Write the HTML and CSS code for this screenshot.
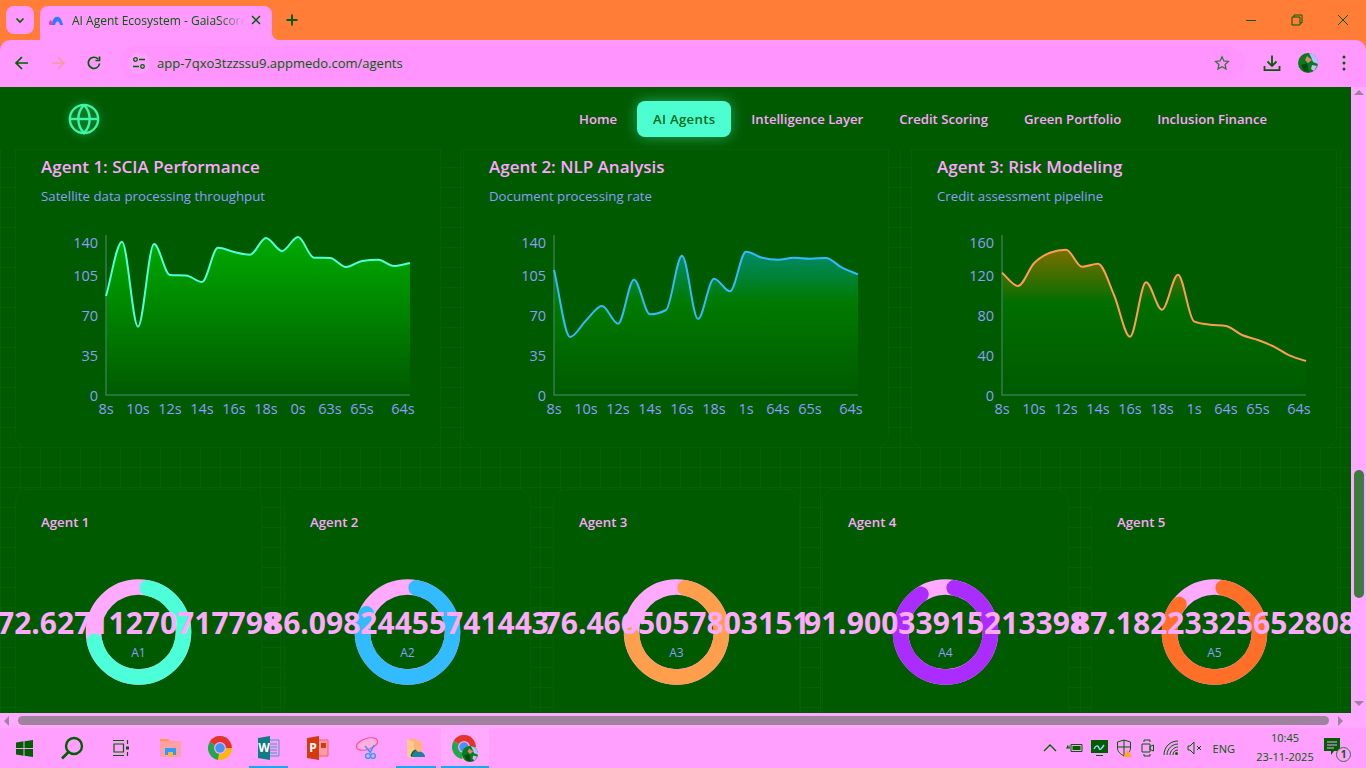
FILE: index.html
```html
<!DOCTYPE html>
<html lang="en">
  <head>
    <meta charset="UTF-8" />
    <meta name="viewport" content="width=device-width, initial-scale=1.0" />
    <title>AI Agent Ecosystem - GaiaScore</title>
    <link rel="stylesheet" href="styles.css">
  </head>
  <body>
    <div class="tabstrip">
      <button class="tab-list">
        <svg width="12" height="12" viewBox="0 0 12 12"><path class="ico" d="M2.5 4.5 6 8l3.5-3.5" stroke-width="1.6"/></svg>
      </button>
      <div class="tab">
        <svg class="favicon" width="15" height="12" viewBox="0 0 15 12"><path d="M1 11a3 3 0 0 1 1-5l2 5z" fill="#ff2fb0"/><path d="M3 11C3 1 12 -1 14 11h-3C10 6 7 6 6 11z" fill="#2a7dff"/></svg>
        <span class="tab-title">AI Agent Ecosystem - GaiaScore</span>
        <svg width="10" height="10" viewBox="0 0 10 10"><path class="ico" d="M1 1l8 8M9 1 1 9" stroke-width="1.5"/></svg>
      </div>
      <svg class="new-tab" width="12" height="12" viewBox="0 0 12 12"><path class="ico" d="M6 .5v11M.5 6h11" stroke-width="2"/></svg>
      <div class="window-btns">
        <svg width="12" height="12" viewBox="0 0 12 12"><path class="ico" d="M1 6.5h10"/></svg>
        <svg width="12" height="12" viewBox="0 0 12 12"><path class="ico" d="M1 3h8v8H1zM3 3V1h8v8H9"/></svg>
        <svg width="12" height="12" viewBox="0 0 12 12"><path class="ico" d="M1 1l10 10M11 1 1 11"/></svg>
      </div>
    </div>

    <div class="toolbar">
      <svg class="nav-ico" width="16" height="16" viewBox="0 0 16 16"><path class="ico" d="M14 8H2.5M8 2 2 8l6 6" stroke-width="1.7"/></svg>
      <svg class="nav-ico" width="16" height="16" viewBox="0 0 16 16"><path class="ico faded" d="M2 8h11.5M8 2l6 6-6 6" stroke-width="1.5"/></svg>
      <svg class="nav-ico" width="16" height="16" viewBox="0 0 16 16"><path class="ico" d="M13.5 8.5A5.6 5.6 0 1 1 12 4M13.5 1.500V5.500H9.500" stroke-width="1.7"/></svg>
      <div class="omnibox">
        <span class="site-chip">
          <svg width="14" height="14" viewBox="0 0 14 14"><circle class="ico" cx="3.500" cy="3.500" r="1.800" stroke-width="1.300"/><path class="ico" d="M7 3.500h6M1 10.500h6" stroke-width="1.300"/><circle class="ico" cx="10.500" cy="10.500" r="1.800" stroke-width="1.300"/></svg>
        </span>
        <span class="url">app-7qxo3tzzssu9.appmedo.com/agents</span>
        <svg class="star" width="16" height="16" viewBox="0 0 16 16"><path class="ico star-line" d="m8 1.800 1.900 4.100 4.500.5-3.300 3 .9 4.500L8 11.700l-4 2.200.9-4.500-3.300-3 4.500-.5z" stroke-width="1.300"/></svg>
      </div>
      <div class="toolbar-end">
        <svg width="18" height="18" viewBox="0 0 18 18"><path class="ico" d="M9 1.500v10M4.500 7.500 9 12l4.500-4.500M1.500 12v4.200h15V12" stroke-width="1.800"/></svg>
        <svg class="avatar" width="20" height="20" viewBox="0 0 20 20"><use href="#avatar"/></svg>
        <svg class="kebab" width="4" height="16" viewBox="0 0 4 16"><circle class="dot" cx="2" cy="2" r="1.500"/><circle class="dot" cx="2" cy="8" r="1.500"/><circle class="dot" cx="2" cy="14" r="1.500"/></svg>
      </div>
    </div>

    <div class="viewport">
      <main>
        <nav class="topnav">
          <svg class="logo" width="34" height="34" viewBox="0 0 24 24"><circle cx="12" cy="12" r="10"/><path d="M12 2a14.500 14.500 0 0 0 0 20 14.500 14.500 0 0 0 0-20"/><path d="M2 12h20"/></svg>
          <div class="nav-links">
            <a>Home</a>
            <a class="active">AI Agents</a>
            <a>Intelligence Layer</a>
            <a>Credit Scoring</a>
            <a>Green Portfolio</a>
            <a>Inclusion Finance</a>
          </div>
        </nav>

        <section class="chart-row">
          <div class="card chart-card">
            <h3>Agent 1: SCIA Performance</h3>
            <p>Satellite data processing throughput</p>
            <svg class="chart" width="374" height="192" viewBox="0 0 374 192">
              <defs>
                <linearGradient id="fill1" x1="0" y1="0" x2="0" y2="1">
                  <stop offset="0" stop-color="#00aa00"/>
                  <stop offset="1" stop-color="#005a00"/>
                </linearGradient>
              </defs>
              <path class="area" id="area1" fill="url(#fill1)"/>
              <path class="axis" d="M65 7V167H369"/>
              <path class="line line-teal" id="line1"/>
              <g class="y-ticks">
                <text x="57" y="20">140</text><text x="57" y="53">105</text><text x="57" y="93">70</text><text x="57" y="133">35</text><text x="57" y="173">0</text>
              </g>
              <g class="x-ticks">
                <text x="65" y="186">8s</text><text x="97" y="186">10s</text><text x="129" y="186">12s</text><text x="161" y="186">14s</text><text x="193" y="186">16s</text><text x="225" y="186">18s</text><text x="257" y="186">0s</text><text x="289" y="186">63s</text><text x="321" y="186">65s</text><text x="362" y="186">64s</text>
              </g>
            </svg>
          </div>

          <div class="card chart-card">
            <h3>Agent 2: NLP Analysis</h3>
            <p>Document processing rate</p>
            <svg class="chart" width="374" height="192" viewBox="0 0 374 192">
              <defs>
                <linearGradient id="fill2" x1="0" y1="0" x2="0" y2="1">
                  <stop offset="0" stop-color="#008a6a"/>
                  <stop offset=".35" stop-color="#007a00"/>
                  <stop offset="1" stop-color="#005a00"/>
                </linearGradient>
              </defs>
              <path class="area" id="area2" fill="url(#fill2)"/>
              <path class="axis" d="M65 7V167H369"/>
              <path class="line line-blue" id="line2"/>
              <g class="y-ticks">
                <text x="57" y="20">140</text><text x="57" y="53">105</text><text x="57" y="93">70</text><text x="57" y="133">35</text><text x="57" y="173">0</text>
              </g>
              <g class="x-ticks">
                <text x="65" y="186">8s</text><text x="97" y="186">10s</text><text x="129" y="186">12s</text><text x="161" y="186">14s</text><text x="193" y="186">16s</text><text x="225" y="186">18s</text><text x="257" y="186">1s</text><text x="289" y="186">64s</text><text x="321" y="186">65s</text><text x="362" y="186">64s</text>
              </g>
            </svg>
          </div>

          <div class="card chart-card">
            <h3>Agent 3: Risk Modeling</h3>
            <p>Credit assessment pipeline</p>
            <svg class="chart" width="374" height="192" viewBox="0 0 374 192">
              <defs>
                <linearGradient id="fill3" x1="0" y1="0" x2="0" y2="1">
                  <stop offset="0" stop-color="#7c6e00"/>
                  <stop offset=".37" stop-color="#006e00"/>
                  <stop offset="1" stop-color="#005a00"/>
                </linearGradient>
              </defs>
              <path class="area" id="area3" fill="url(#fill3)"/>
              <path class="axis" d="M65 7V167H369"/>
              <path class="line line-orange" id="line3"/>
              <g class="y-ticks">
                <text x="57" y="20">160</text><text x="57" y="53">120</text><text x="57" y="93">80</text><text x="57" y="133">40</text><text x="57" y="173">0</text>
              </g>
              <g class="x-ticks">
                <text x="65" y="186">8s</text><text x="97" y="186">10s</text><text x="129" y="186">12s</text><text x="161" y="186">14s</text><text x="193" y="186">16s</text><text x="225" y="186">18s</text><text x="257" y="186">1s</text><text x="289" y="186">64s</text><text x="321" y="186">65s</text><text x="362" y="186">64s</text>
              </g>
            </svg>
          </div>
        </section>

        <section class="ring-row">
          <div class="card ring-card">
            <h4>Agent 1</h4>
            <svg class="ring" width="195" height="150" viewBox="0 0 195 150">
              <circle class="ring-track" cx="97.500" cy="75" r="45"/>
              <path class="ring-arc ring-teal" pathLength="360" stroke-dasharray="247 360" d="M97.500 30a45 45 0 1 1 0 90 45 45 0 1 1 0-90" transform="rotate(11 97.500 75)"/>
              <text class="ring-value" x="97.500" y="77">72.62711270717798</text>
              <text class="ring-name" x="97.500" y="100">A1</text>
            </svg>
          </div>
          <div class="card ring-card">
            <h4>Agent 2</h4>
            <svg class="ring" width="195" height="150" viewBox="0 0 195 150">
              <circle class="ring-track" cx="97.500" cy="75" r="45"/>
              <path class="ring-arc ring-blue" pathLength="360" stroke-dasharray="283 360" d="M97.500 30a45 45 0 1 1 0 90 45 45 0 1 1 0-90" transform="rotate(11 97.500 75)"/>
              <text class="ring-value" x="97.500" y="77">86.09824455741443</text>
              <text class="ring-name" x="97.500" y="100">A2</text>
            </svg>
          </div>
          <div class="card ring-card">
            <h4>Agent 3</h4>
            <svg class="ring" width="195" height="150" viewBox="0 0 195 150">
              <circle class="ring-track" cx="97.500" cy="75" r="45"/>
              <path class="ring-arc ring-orange" pathLength="360" stroke-dasharray="255 360" d="M97.500 30a45 45 0 1 1 0 90 45 45 0 1 1 0-90" transform="rotate(11 97.500 75)"/>
              <text class="ring-value" x="97.500" y="77">76.4665057803151</text>
              <text class="ring-name" x="97.500" y="100">A3</text>
            </svg>
          </div>
          <div class="card ring-card">
            <h4>Agent 4</h4>
            <svg class="ring" width="195" height="150" viewBox="0 0 195 150">
              <circle class="ring-track" cx="97.500" cy="75" r="45"/>
              <path class="ring-arc ring-purple" pathLength="360" stroke-dasharray="316 360" d="M97.500 30a45 45 0 1 1 0 90 45 45 0 1 1 0-90" transform="rotate(11 97.500 75)"/>
              <text class="ring-value" x="97.500" y="77">91.90033915213398</text>
              <text class="ring-name" x="97.500" y="100">A4</text>
            </svg>
          </div>
          <div class="card ring-card">
            <h4>Agent 5</h4>
            <svg class="ring" width="195" height="150" viewBox="0 0 195 150">
              <circle class="ring-track" cx="97.500" cy="75" r="45"/>
              <path class="ring-arc ring-deep" pathLength="360" stroke-dasharray="297 360" d="M97.500 30a45 45 0 1 1 0 90 45 45 0 1 1 0-90" transform="rotate(11 97.500 75)"/>
              <text class="ring-value" x="97.500" y="77">87.18223325652808</text>
              <text class="ring-name" x="97.500" y="100">A5</text>
            </svg>
          </div>
        </section>
      </main>

      <div class="vscroll">
        <span class="arrow arrow-up"></span>
        <span class="vthumb"></span>
        <span class="arrow arrow-down"></span>
      </div>
    </div>

    <div class="hscroll">
      <span class="arrow arrow-left"></span>
      <span class="hthumb"></span>
      <span class="arrow arrow-right"></span>
    </div>

    <footer class="taskbar">
      <div class="task-item wide">
        <svg width="17" height="17" viewBox="0 0 17 17"><path class="win" d="M0 2.400 7.500 1.300V8H0zM8.500 1.200 17 0v8H8.500zM0 9h7.500v6.700L0 14.600zM8.500 9H17v8l-8.500-1.200z"/></svg>
      </div>
      <div class="task-item wide">
        <svg width="24" height="24" viewBox="0 0 24 24"><circle class="ico" cx="14" cy="10" r="8" stroke-width="2.400"/><path class="ico" d="M8.500 16 2 22.500" stroke-width="2.600"/></svg>
      </div>
      <div class="task-item view-item">
        <svg width="18" height="18" viewBox="0 0 18 18"><path class="ico" d="M1 1.500h11M1 16.500h11M2 5h9.500v8H2zM15.500 1v4M15.500 13v4" stroke-width="1.200"/><rect class="dot" x="14" y="7.500" width="3" height="3"/></svg>
      </div>
      <div class="task-item">
        <svg width="22" height="20" viewBox="0 0 22 20"><path d="M0 1h8l2 2H0z" fill="#ff9c2a"/><path d="M0 3h21v16H0z" fill="#ff9fa6"/><path d="M5 17V10h11v7h-3v-3H8v3z" fill="#2a9dff"/><path d="M8 14h5v5H8z" fill="#ffb52e"/></svg>
      </div>
      <div class="task-item">
        <svg width="24" height="24" viewBox="0 0 24 24"><use href="#chrome"/></svg>
      </div>
      <div class="task-item running">
        <svg width="22" height="24" viewBox="0 0 22 24"><path d="M10 4h11v16H10z" fill="#ff9cff" stroke="#3f9fc0"/><path class="sheet-lines" d="M12 8h7M12 11h7M12 14h7M12 17h7"/><path d="M0 2 12 0v24L0 22z" fill="#0f7c86"/><text class="doc-letter" x="6" y="16">W</text></svg>
      </div>
      <div class="task-item">
        <svg width="22" height="24" viewBox="0 0 22 24"><path d="M10 4h11v16H10z" fill="#ff9ca8" stroke="#ff5a55"/><path d="M14 7h5v5h-5z" fill="#d23a10"/><path d="M0 2 12 0v24L0 22z" fill="#d23a10"/><text class="doc-letter" x="6" y="16">P</text></svg>
      </div>
      <div class="task-item">
        <svg width="24" height="24" viewBox="0 0 24 24"><ellipse cx="12" cy="8" rx="11" ry="5.500" fill="#ffb0e0" stroke="#ff4fa0" stroke-width="1.200" transform="rotate(-18 12 8)"/><path d="M10 10l5 6M19 9l-4 8" stroke="#2a9dff" stroke-width="1.500"/><circle cx="13" cy="20" r="2.400" fill="none" stroke="#2a9dff" stroke-width="1.400"/><circle cx="18" cy="20" r="2.400" fill="none" stroke="#2a9dff" stroke-width="1.400"/></svg>
      </div>
      <div class="task-item running folder-item">
        <svg width="22" height="24" viewBox="0 0 22 24"><path d="M2 3h8l7 3v15H2z" fill="#ffb27a"/><path d="M2 3l7 3v17l-7-3z" fill="#ffc98f"/><path d="M6 21c1-6 5-9 7-5 3-1 7 1 7 5z" fill="#1f7f9f"/><path d="M6 20c1-3 3-6 5-6" stroke="#005e00" fill="none" stroke-width="1.200"/></svg>
      </div>
      <div class="task-item running current">
        <svg width="27" height="27" viewBox="0 0 27 27"><svg width="24" height="24" viewBox="0 0 24 24"><use href="#chrome"/></svg><svg x="10" y="11" width="16" height="16" viewBox="0 0 20 20"><use href="#avatar"/></svg></svg>
      </div>

      <div class="tray">
        <svg width="16" height="10" viewBox="0 0 16 10"><path class="ico" d="M2 8l6-6 6 6" stroke-width="1.300"/></svg>
        <svg width="17" height="12" viewBox="0 0 17 12"><path class="ico" d="M5 2.500h11v7H5z"/><rect class="dot" x="6.500" y="4" width="8" height="4"/><path class="ico" d="M0 6h4M1.500 3.500V6M3 3.500V6"/></svg>
        <svg width="17" height="16" viewBox="0 0 17 16"><rect class="dot" width="17" height="13"/><path d="M3 9c2-4 4-4 5-1s3 0 5-3" stroke="#9ad0ff" fill="none" stroke-width="1.500"/><path class="ico" d="M5 15.500h7"/></svg>
        <svg width="17" height="18" viewBox="0 0 17 18"><path class="ico" d="M8 1 1.500 3v6c0 4 3 6 6.500 8 3.500-2 6.500-4 6.500-8V3zM8 1v16M1.500 8h13"/><path d="M11.500 11 16 18H7z" fill="#ffa91f"/></svg>
        <svg width="14" height="18" viewBox="0 0 14 18"><path class="ico" d="M3 3V1h6v2M3 15v2h6v-2M1 5h8v8H1zM12.500 6v6L9 10.500v-3z"/></svg>
        <svg width="16" height="16" viewBox="0 0 16 16"><path class="ico" d="M1 15C1 7 7 1 15 1M4 15C4 9 9 4 15 4M7 15c0-4 4-8 8-8M10 15c0-3 2-5 5-5"/><circle class="dot" cx="13.500" cy="13.500" r="1.500"/></svg>
        <svg width="15" height="14" viewBox="0 0 15 14"><path class="ico" d="M1 5v4h2l4 4V1L3 5zM10 5l4 4M14 5l-4 4"/></svg>
        <span class="lang">ENG</span>
        <div class="clock"><span>10:45</span><span>23-11-2025</span></div>
        <div class="notify">
          <svg width="24" height="24" viewBox="0 0 24 24"><path class="dot" d="M2 2h16v13h-6l-3 4v-4H2z"/><path d="M5 6h10M5 9h10M5 12h7" stroke="#ffa0ff" stroke-width="1.200"/></svg>
          <span class="notify-count">1</span>
        </div>
      </div>
    </footer>

    <svg class="icon-defs" width="0" height="0">
      <symbol id="chrome" viewBox="2 2 20 20">
        <path d="M12 12 3.300 7A10 10 0 0 1 22 12z" fill="#e2352a"/>
        <path d="M12 12 3.300 7A10 10 0 0 0 10.500 21.900z" fill="#22a84a"/>
        <path d="M12 12 22 12A10 10 0 0 1 10.500 21.900z" fill="#fbb80a"/>
        <circle cx="12" cy="12" r="5" fill="#ffa0ff"/>
        <circle cx="12" cy="12" r="3.900" fill="#3f96f5"/>
      </symbol>
      <symbol id="avatar" viewBox="0 0 20 20">
        <circle cx="10" cy="10" r="10" fill="#0a7a1e"/>
        <path d="M11 0a10 10 0 0 1 9 11l-5-2-2-5z" fill="#a9c4ff"/>
        <path d="M9 3l5 4-4 3-3-3z" fill="#d98a70"/>
        <path d="M14 12l5 1-3 5-3-2z" fill="#c9b8ff"/>
        <path d="M3 12l6-2 2 9-5-1z" fill="#044d10"/>
      </symbol>
    </svg>

    <script src="charts.js"></script>
  </body>
</html>
```

FILE: styles.css
```css
* {
  box-sizing: border-box;
}

html, body {
  height: 100%;
  margin: 0;
  overflow: hidden;
}

body {
  display: flex;
  flex-direction: column;
  font-family: "Open Sans", "Noto Sans", sans-serif;
  color: #ffa6ff;
  background-color: #ff7d37;
}

.ico {
  fill: none;
  stroke: #005e00;
}

.ico.faded {
  stroke: #f59a9a;
}

.dot {
  fill: #005e00;
}

.win {
  fill: #005e00;
}

/* browser chrome */
.tabstrip {
  height: 40px;
  flex: none;
  display: flex;
  align-items: flex-start;
  padding-left: 6px;
  background-color: #ff7d37;
}

.tab-list {
  width: 28px;
  height: 28px;
  margin-top: 6px;
  padding: 0;
  border: 0;
  border-radius: 8px;
  background-color: #ff99ff;
  display: flex;
  align-items: center;
  justify-content: center;
}

.tab {
  position: relative;
  width: 232px;
  height: 34px;
  margin: 6px 0 0 6px;
  padding: 0 11px 6px 9px;
  display: flex;
  align-items: center;
  border-radius: 8px 8px 0 0;
  background-color: #ff99ff;
}

.tab::after {
  content: "";
  position: absolute;
  right: -8px;
  bottom: 0;
  width: 8px;
  height: 8px;
  background: radial-gradient(circle at 100% 0, transparent 8px, #ff99ff 8.5px);
}

.favicon {
  flex: none;
}

.tab-title {
  flex: 1;
  margin: 0 6px 0 8px;
  overflow: hidden;
  white-space: nowrap;
  font-size: 12px;
  color: #005e00;
  -webkit-mask-image: linear-gradient(to right, #000 85%, transparent);
  mask-image: linear-gradient(to right, #000 85%, transparent);
}

.new-tab {
  margin: 14px 0 0 14px;
}

.window-btns {
  margin-left: auto;
  display: flex;
  gap: 34px;
  padding: 14px 17px 0 0;
}

.toolbar {
  height: 47px;
  flex: none;
  display: flex;
  align-items: center;
  padding: 0 0 1px 14px;
  border-radius: 10px 10px 0 0;
  background-color: #ff99ff;
}

.nav-ico {
  margin-right: 20px;
}

.omnibox {
  width: 1125px;
  height: 34px;
  margin-left: -2px;
  padding: 0 15px 0 8px;
  display: flex;
  align-items: center;
  border-radius: 17px;
  background-color: #ff94ff;
}

.site-chip {
  width: 22px;
  height: 22px;
  display: flex;
  align-items: center;
  justify-content: center;
  border-radius: 50%;
  background-color: #ffa0ff;
}

.url {
  flex: 1;
  margin-left: 7px;
  font-size: 13px;
  color: #005e00;
}

.star-line {
  stroke: #3f7040;
}

.toolbar-end {
  display: flex;
  align-items: center;
  margin-left: 18px;
}

.avatar {
  margin-left: 17px;
}

.kebab {
  margin-left: 24px;
}

/* page */
.viewport {
  height: 626px;
  flex: none;
  display: flex;
}

main {
  width: 1351px;
  overflow: hidden;
  background-color: #005a00;
  background-image:
    linear-gradient(#066106 1px, transparent 1px),
    linear-gradient(90deg, #066106 1px, transparent 1px);
  background-size: 20px 20px;
}

.topnav {
  height: 63px;
  padding: 0 68px 0 67px;
  display: flex;
  align-items: center;
  justify-content: space-between;
  background-color: #005a00;
}

.logo {
  fill: none;
  stroke: #3df5a6;
  stroke-width: 1.700;
  filter: drop-shadow(0 0 4px rgba(61, 245, 166, 0.5));
}

.nav-links {
  display: flex;
  gap: 4px;
}

.nav-links a {
  padding: 8px 16px;
  border-radius: 8px;
  font-size: 13.150px;
  line-height: 20px;
  font-weight: 600;
}

.nav-links a.active {
  letter-spacing: 0.3px;
  color: #006a20;
  background-color: #4dffd0;
  box-shadow: 0 0 14px rgba(77, 255, 208, 0.45);
}

.card {
  border-radius: 12px;
  background-color: #005a00;
  box-shadow: 0 0 0 1px #056005;
}

.chart-row {
  display: grid;
  grid-template-columns: repeat(3, 1fr);
  gap: 24px;
  padding: 0 16px;
}

.chart-card {
  height: 297px;
  padding: 5px 25px 0;
  border-radius: 0 0 12px 12px;
}

.chart-card h3 {
  margin: 0;
  font-size: 17px;
  line-height: 24px;
  font-weight: 600;
}

.chart-card p {
  margin: 7px 0 0;
  font-size: 13.250px;
  line-height: 20px;
  color: #8f9cff;
}

.chart {
  display: block;
  margin-top: 22px;
}

.area {
  stroke: none;
}

.axis {
  fill: none;
  stroke: #2f7f4f;
  stroke-width: 1.500;
}

.line {
  fill: none;
  stroke-width: 2;
}

.line-teal { stroke: #4dffd8; }
.line-blue { stroke: #33bbff; }
.line-orange { stroke: #ff9f4d; }

.y-ticks text,
.x-ticks text {
  font-size: 14.500px;
  fill: #8f9cff;
}

.y-ticks text {
  text-anchor: end;
}

.x-ticks text {
  text-anchor: middle;
}

.ring-row {
  display: grid;
  grid-template-columns: repeat(5, 1fr);
  gap: 24px;
  margin-top: 43px;
  padding: 0 16px;
}

.ring-card {
  height: 240px;
  padding: 22px 25px 0;
}

.ring-card h4 {
  margin: 0;
  font-size: 13.250px;
  line-height: 20px;
  font-weight: 600;
}

.ring {
  position: relative;
  z-index: 1;
  display: block;
  margin-top: 25px;
  overflow: visible;
}

.ring-track {
  fill: none;
  stroke: #ffaaff;
  stroke-width: 15.500;
}

.ring-arc {
  fill: none;
  stroke-width: 15.500;
  stroke-linecap: round;
}

.ring-teal { stroke: #4dffd8; }
.ring-blue { stroke: #33bbff; }
.ring-orange { stroke: #ff9f4d; }
.ring-purple { stroke: #aa2cff; }
.ring-deep { stroke: #ff6f28; }

.ring-value {
  font-size: 30px;
  font-weight: 700;
  text-anchor: middle;
  fill: #ffaaff;
}

.ring-name {
  font-size: 12px;
  text-anchor: middle;
  fill: #8f9cff;
}

/* scrollbars */
.vscroll {
  width: 15px;
  display: flex;
  flex-direction: column;
  align-items: center;
  background-color: #ffaaff;
}

.vthumb {
  width: 10px;
  height: 128px;
  margin-top: 375px;
  border-radius: 5px;
  background-color: #3d7a3d;
}

.hscroll {
  height: 15px;
  flex: none;
  display: flex;
  align-items: center;
  padding: 0 19px 0 4px;
  background-color: #ffaaff;
}

.hthumb {
  width: 1311px;
  height: 9px;
  margin: 0 9px 0 9px;
  border-radius: 5px;
  background-color: #a0829f;
}

.arrow {
  width: 0;
  height: 0;
  border: 5px solid transparent;
}

.arrow-up {
  margin-top: 3px;
  border-top-width: 0;
  border-bottom: 5px solid #a0829f;
}

.arrow-down {
  margin-top: 103px;
  border-bottom-width: 0;
  border-top: 5px solid #a0829f;
}

.arrow-left {
  border-left-width: 0;
  border-right: 5px solid #a0829f;
}

.arrow-right {
  border-right-width: 0;
  border-left: 5px solid #a0829f;
}

/* windows taskbar */
.taskbar {
  flex: 1;
  display: flex;
  align-items: center;
  background-color: #ffa0ff;
}

.task-item {
  position: relative;
  width: 49px;
  height: 40px;
  display: flex;
  align-items: center;
  justify-content: center;
}

.task-item.wide {
  width: 48px;
}

.task-item.view-item,
.task-item.folder-item {
  width: 50px;
}

.task-item.running::after {
  content: "";
  position: absolute;
  left: 5px;
  right: 5px;
  bottom: 0;
  height: 2px;
  background-color: #1ea7f0;
}

.task-item.current {
  width: 48px;
  background-color: #ffa9ff;
}

.task-item.current::after {
  left: 0;
  right: 0;
}

.sheet-lines {
  stroke: #3f9fc0;
  stroke-width: 1;
}

.doc-letter {
  font-size: 12px;
  font-weight: 700;
  text-anchor: middle;
  fill: #ffffff;
}

.tray {
  margin-left: auto;
  display: flex;
  align-items: center;
  gap: 8px;
  padding-right: 20px;
}

.lang {
  margin: 0 13px 0 3px;
  font-size: 11px;
  color: #005e00;
}

.clock {
  width: 58px;
  display: flex;
  flex-direction: column;
  align-items: center;
  gap: 3px;
  margin-top: -2px;
  font-size: 11px;
  line-height: 16px;
  white-space: nowrap;
  color: #005e00;
}

.notify {
  position: relative;
  width: 24px;
  height: 24px;
}

.notify-count {
  position: absolute;
  right: -5px;
  bottom: -2px;
  width: 15px;
  height: 15px;
  border: 1px solid #3f7040;
  border-radius: 50%;
  font-size: 10px;
  line-height: 13px;
  font-weight: 700;
  text-align: center;
  color: #005e00;
  background-color: #ffa0ff;
}

.icon-defs {
  position: absolute;
}
```

FILE: charts.js
```js
// y positions of each series, in chart pixels. x starts at 65 and moves 16px a point
let series = {
  1: [68, 13.7, 98.7, 16, 47, 47.5, 54, 19.7, 24, 26.7, 10, 23, 9, 29.7, 30, 39, 33, 31.7, 38, 35],
  2: [42, 109, 92.5, 78, 95.7, 51.7, 86.3, 82, 27.7, 91, 50.7, 63.3, 23.7, 29.7, 31.7, 29.7, 30.7, 30, 39.7, 46.3],
  3: [44.7, 58, 35.3, 24.7, 21.7, 38.7, 35.7, 67, 108.7, 54.3, 81.7, 46.7, 93.3, 96.7, 98, 107, 112, 118.7, 127.7, 133]
};

let startX = 65;
let stepX = 16;
let baseY = 167;

// same tangents as a monotone-x curve
function tangents(ys) {
  let slopes = [];
  for (let i = 0; i < ys.length - 1; i++) {
    slopes.push((ys[i + 1] - ys[i]) / stepX);
  }
  let out = [slopes[0]];
  for (let i = 1; i < ys.length - 1; i++) {
    let a = slopes[i - 1];
    let b = slopes[i];
    if (a * b <= 0) {
      out.push(0);
    } else {
      let sign = a > 0 ? 1 : -1;
      out.push(sign * Math.min(Math.abs(a), Math.abs(b), Math.abs(a + b) / 4) * 2);
    }
  }
  out.push(slopes[slopes.length - 1]);
  return out;
}

function linePath(ys) {
  let t = tangents(ys);
  let d = 'M' + startX + ' ' + ys[0];
  for (let i = 0; i < ys.length - 1; i++) {
    let x = startX + i * stepX;
    let third = stepX / 3;
    d += 'C' + (x + third) + ' ' + (ys[i] + t[i] * third) + ' ' +
      (x + stepX - third) + ' ' + (ys[i + 1] - t[i + 1] * third) + ' ' +
      (x + stepX) + ' ' + ys[i + 1];
  }
  return d;
}

for (let id in series) {
  let ys = series[id];
  let d = linePath(ys);
  let endX = startX + (ys.length - 1) * stepX;
  document.getElementById('line' + id).setAttribute('d', d);
  document.getElementById('area' + id).setAttribute('d', d + 'L' + endX + ' ' + baseY + 'L' + startX + ' ' + baseY + 'Z');
}
```
